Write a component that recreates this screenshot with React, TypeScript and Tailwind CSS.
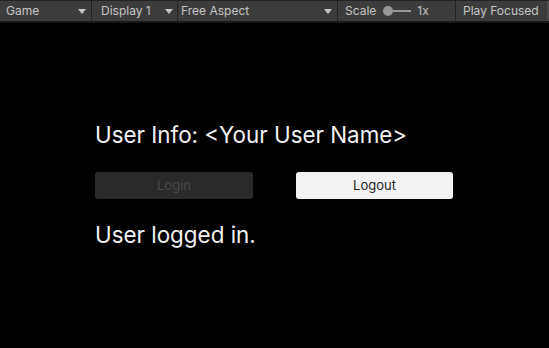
function Arrow() {
  return (
    <svg width="8" height="5" viewBox="0 0 8 5" className="fill-[#c4c4c4]">
      <path d="M0 0h8L4 5z" />
    </svg>
  );
}

export default function App() {
  return (
    <div className="w-[549px] h-[348px] bg-black flex flex-col overflow-hidden font-['Inter','Liberation_Sans',sans-serif]">
      {/* toolbar */}
      <div className="h-[21px] bg-[#3c3c3c] border-t border-[#232323] flex items-stretch text-[12px] text-[#c4c4c4] leading-none">
        <div className="w-[92px] flex items-center justify-between pl-[6px] pr-[5px] border-r border-[#232323]">
          <span>Game</span>
          <Arrow />
        </div>
        <div className="w-[86px] flex items-center justify-between pl-[9px] pr-[4px] border-r border-[#232323]">
          <span>Display 1</span>
          <Arrow />
        </div>
        <div className="w-[160px] flex items-center justify-between pl-[3px] pr-[5px] border-r border-[#232323]">
          <span>Free Aspect</span>
          <Arrow />
        </div>
        <div className="w-[118px] flex items-center pl-[7px] border-r border-[#232323]">
          <span>Scale</span>
          <div className="ml-[7px] flex items-center">
            <div className="w-[10px] h-[10px] rounded-full bg-[#999999]" />
            <div className="w-[18px] h-[2px] bg-[#999999]" />
          </div>
          <span className="ml-[6px]">1x</span>
        </div>
        <div className="flex-1 flex items-center pl-[7px] border-r-2 border-[#4a4a4a]">
          <span>Play Focused</span>
        </div>
      </div>
      <div className="h-[2px] bg-[#191919]" />
      {/* game view */}
      <div className="flex-1 flex flex-col pl-[95px] pt-[99px] text-white">
        <div className="text-[22.4px] leading-[26px] text-[#f2f2f2]">User Info: &lt;Your User Name&gt;</div>
        <div className="flex mt-[24px] gap-[43px]">
          <div className="w-[158px] h-[27px] rounded-[3px] bg-[#2a2a2a] flex items-center justify-center text-[13px] text-[#4a4a4a]">
            Login
          </div>
          <div className="w-[157px] h-[27px] rounded-[3px] bg-[#f2f2f2] flex items-center justify-center text-[13px] text-[#222222]">
            Logout
          </div>
        </div>
        <div className="mt-[23px] text-[22.4px] leading-[26px] text-[#f2f2f2]">User logged in.</div>
      </div>
    </div>
  );
}
